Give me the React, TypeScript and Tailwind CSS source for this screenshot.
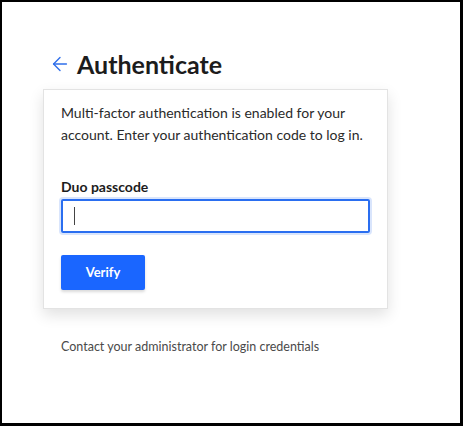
import { ArrowLeft } from 'lucide-react'

export default function App() {
  return (
    <div className="h-[426px] w-[463px] border-l-2 border-t-2 border-r-[3px] border-b-[3px] border-black bg-white font-['Lato',sans-serif] text-[#1f1f1f]">
      <div className="pl-[41px] pt-[46px]">
        <div className="flex items-center gap-[6px] pl-[6px]">
          <ArrowLeft className="h-[22px] w-[22px] text-[#2f6fea]" strokeWidth={1.5} />
          <h1 className="text-[25px] font-bold leading-[32px] text-[#1c1c1c]">Authenticate</h1>
        </div>
        <div className="mt-[9px] w-[345px] border border-[#e3e3e3] bg-white px-[17px] pt-[12px] pb-[18px] shadow-[0_6px_14px_rgba(0,0,0,0.12)]">
          <p className="text-[14px] leading-[22px] text-[#2a2a2a]">
            Multi-factor authentication is enabled for your account. Enter your authentication code to log in.
          </p>
          <label className="mt-[31px] block text-[14px] font-bold leading-[20px] text-[#1c1c1c]">Duo passcode</label>
          <div className="mt-[2px] flex h-[34px] w-[309px] items-center rounded-[2px] border-2 border-[#2a6ef0] px-[11px] shadow-[0_0_0_2px_rgba(42,110,240,0.18)]">
            <span className="h-[18px] w-px bg-[#444]" />
          </div>
          <button className="mt-[22px] flex h-[35px] w-[84px] items-center justify-center rounded-[2px] bg-[#1a66ff] text-[13px] font-bold text-white shadow-[0_2px_3px_rgba(0,0,0,0.15)]">
            Verify
          </button>
        </div>
        <p className="mt-[30px] pl-[18px] text-[12.5px] leading-[16px] text-[#4a4a4a]">
          Contact your administrator for login credentials
        </p>
      </div>
    </div>
  )
}
